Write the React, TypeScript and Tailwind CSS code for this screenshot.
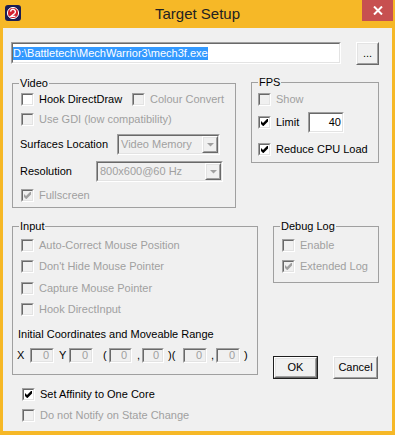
import React from 'react'

type BoxProps = { className?: string; inner?: string; children?: React.ReactNode }

// classic 3D borders
function Sunken({ className = '', inner = '', children }: BoxProps) {
  return (
    <div className={`border border-t-[#a0a0a0] border-l-[#a0a0a0] border-b-white border-r-white ${className}`}>
      <div className={`h-full w-full border border-t-[#696969] border-l-[#696969] border-b-[#e3e3e3] border-r-[#e3e3e3] ${inner}`}>
        {children}
      </div>
    </div>
  )
}

function Raised({ className = '', inner = '', children }: BoxProps) {
  return (
    <div className={`border border-t-white border-l-white border-b-[#696969] border-r-[#696969] ${className}`}>
      <div className={`h-full w-full border border-t-[#e3e3e3] border-l-[#e3e3e3] border-b-[#a0a0a0] border-r-[#a0a0a0] ${inner}`}>
        {children}
      </div>
    </div>
  )
}

function Box({ checked, disabled }: { checked?: boolean; disabled?: boolean }) {
  return (
    <Sunken className="h-[13px] w-[13px] shrink-0" inner={disabled ? 'bg-[#f0f0f0]' : 'bg-white'}>
      {checked && (
        <svg viewBox="0 0 7 7" className="m-[1px] h-[7px] w-[7px]" fill={disabled ? '#a0a0a0' : '#000'}>
          <path d="M0 2L2 4L6 0H7V2.5L2.5 7H2L0 5Z" />
        </svg>
      )}
    </Sunken>
  )
}

function Check({
  label,
  checked = false,
  disabled = false,
  className = '',
  labelClass = '',
}: {
  label: string
  checked?: boolean
  disabled?: boolean
  className?: string
  labelClass?: string
}) {
  return (
    <div className={`flex h-[13px] items-center gap-[5px] ${className}`}>
      <Box checked={checked} disabled={disabled} />
      <span className={`whitespace-nowrap leading-[13px] ${disabled ? 'text-[#a0a0a0]' : 'text-black'} ${labelClass}`}>
        {label}
      </span>
    </div>
  )
}

function Combo({ value, className = '' }: { value: string; className?: string }) {
  return (
    <Sunken className={`h-[21px] ${className}`} inner="flex items-stretch bg-[#f0f0f0]">
      <span className="flex-1 pl-[2px] leading-[17px] text-[#a0a0a0]">{value}</span>
      <Raised className="w-[16px]" inner="flex items-center justify-center bg-[#f0f0f0]">
        <svg width="7" height="5" viewBox="0 0 7 5">
          <path d="M0 1h7L3.5 4.5z" fill="#a0a0a0" />
        </svg>
      </Raised>
    </Sunken>
  )
}

function Group({ title, className = '', children }: { title: string; className?: string; children?: React.ReactNode }) {
  return (
    <div className={`relative border border-[#a0a0a0] ${className}`}>
      <span className="absolute left-[6px] top-[-7px] bg-[#f0f0f0] px-[1px] leading-[13px] text-black">{title}</span>
      {children}
    </div>
  )
}

function Num({ w }: { w: string }) {
  return (
    <Sunken className={`h-[15px] ${w}`} inner="bg-[#f0f0f0] pr-[3px] text-right leading-[11px] text-[#a0a0a0]">
      0
    </Sunken>
  )
}

function AppIcon() {
  return (
    <svg width="16" height="16" viewBox="0 0 16 16">
      <rect x="0" y="0" width="16" height="16" rx="3" fill="#1b1d52" />
      <circle cx="8" cy="8" r="5.6" fill="#d3202f" stroke="#fff" strokeWidth="1" />
      <path d="M5.6 6.6a2.4 2.4 0 1 1 4 1.9L6 11.4h4.4" fill="none" stroke="#fff" strokeWidth="1.4" />
    </svg>
  )
}

export default function App() {
  return (
    <div className="flex h-[435px] w-[395px] flex-col bg-[#f6b827] font-['Liberation_Sans',Arial,sans-serif] text-[11px]">
      {/* title bar */}
      <div className="grid h-[28px] grid-cols-[1fr_auto_1fr] items-start">
        <div className="pl-[5px] pt-[5px]">
          <AppIcon />
        </div>
        <div className="pt-[4px] text-[15px] leading-[20px] text-[#222]">Target Setup</div>
        <div className="flex justify-end pr-[2px]">
          <div className="flex h-[21px] w-[31px] items-center justify-center bg-[#c75050]">
            <svg width="10" height="9" viewBox="0 0 10 9">
              <path d="M1 0.5L9 8.5M9 0.5L1 8.5" stroke="#fff" strokeWidth="2" />
            </svg>
          </div>
        </div>
      </div>

      <div className="mx-[3px] mb-[4px] flex-1 bg-[#f0f0f0]">
        {/* path */}
        <div className="ml-[8px] mt-[14px] flex items-start">
          <Sunken className="h-[22px] w-[330px]" inner="flex items-center bg-white">
            <span className="bg-[#3399ff] leading-[13px] text-white">D:\Battletech\MechWarrior3\mech3f.exe</span>
          </Sunken>
          <Raised className="ml-[15px] h-[23px] w-[23px]" inner="flex items-center justify-center bg-[#f0f0f0]">
            <span className="leading-[13px] text-black">...</span>
          </Raised>
        </div>

        {/* video + fps */}
        <div className="mt-[17px] flex items-start">
          <Group title="Video" className="ml-[9px] mt-[1px] h-[125px] w-[224px]">
            <div className="flex flex-col pl-[8px] pt-[9px]">
              <div className="flex">
                <Check label="Hook DirectDraw" className="w-[111px]" />
                <Check label="Colour Convert" disabled />
              </div>
              <Check label="Use GDI (low compatibility)" disabled className="mt-[7px]" />
              <div className="mt-[8px] flex items-center">
                <span className="-ml-[1px] w-[97px] leading-[13px] text-black">Surfaces Location</span>
                <Combo value="Video Memory" className="w-[103px]" />
              </div>
              <div className="mt-[6px] flex items-center">
                <span className="-ml-[1px] w-[76px] leading-[13px] text-black">Resolution</span>
                <Combo value="800x600@60 Hz" className="w-[127px]" />
              </div>
              <Check label="Fullscreen" checked disabled className="mt-[7px]" />
            </div>
          </Group>

          <Group title="FPS" className="ml-[15px] h-[81px] w-[128px]">
            <div className="flex flex-col pl-[6px] pt-[10px]">
              <Check label="Show" disabled />
              <div className="mt-[6px] flex h-[21px] items-center">
                <Check label="Limit" checked labelClass="w-[32px]" />
                <Sunken className="h-[21px] w-[36px]" inner="bg-white pr-[1px] text-right leading-[17px] text-black">
                  40
                </Sunken>
              </div>
              <Check label="Reduce CPU Load" checked className="mt-[10px]" />
            </div>
          </Group>
        </div>

        {/* input + debug */}
        <div className="mt-[18px] flex items-start">
          <Group title="Input" className="ml-[9px] h-[149px] w-[246px]">
            <div className="flex flex-col pl-[8px] pt-[12px]">
              <Check label="Auto-Correct Mouse Position" disabled />
              <Check label="Don't Hide Mouse Pointer" disabled className="mt-[8px]" />
              <Check label="Capture Mouse Pointer" disabled className="mt-[9px]" />
              <Check label="Hook DirectInput" disabled className="mt-[8px]" />
              <span className="-ml-[3px] mt-[12px] leading-[13px] text-black">Initial Coordinates and Moveable Range</span>
              <div className="-ml-[4px] mt-[7px] flex h-[15px] items-center leading-[13px] text-black">
                <span className="w-[13px]">X</span>
                <Num w="w-[24px]" />
                <span className="w-[15px] pl-[5px]">Y</span>
                <Num w="w-[24px]" />
                <span className="w-[16px] pl-[10px]">(</span>
                <Num w="w-[23px]" />
                <span className="w-[10px] pl-[5px]">,</span>
                <Num w="w-[22px]" />
                <span className="w-[19px] pl-[4px]">)(</span>
                <Num w="w-[24px]" />
                <span className="w-[9px] pl-[4px]">,</span>
                <Num w="w-[24px]" />
                <span className="pl-[4px]">)</span>
              </div>
            </div>
          </Group>

          <div className="ml-[15px] flex w-[106px] flex-col">
            <Group title="Debug Log" className="h-[57px]">
              <div className="flex flex-col pl-[8px] pt-[12px]">
                <Check label="Enable" disabled />
                <Check label="Extended Log" checked disabled className="mt-[8px]" />
              </div>
            </Group>
            <div className="mt-[73px] flex gap-[15px]">
              <div className="h-[23px] w-[45px] border border-[#1e1e1e]">
                <Raised className="h-full w-full" inner="flex items-center justify-center bg-[#f0f0f0]">
                  <span className="leading-[13px] text-black">OK</span>
                </Raised>
              </div>
              <Raised className="h-[23px] w-[45px]" inner="flex items-center justify-center bg-[#f0f0f0]">
                <span className="leading-[13px] text-black">Cancel</span>
              </Raised>
            </div>
          </div>
        </div>

        <Check label="Set Affinity to One Core" checked className="ml-[19px] mt-[9px]" />
        <Check label="Do not Notify on State Change" disabled className="ml-[19px] mt-[8px]" />
      </div>
    </div>
  )
}
